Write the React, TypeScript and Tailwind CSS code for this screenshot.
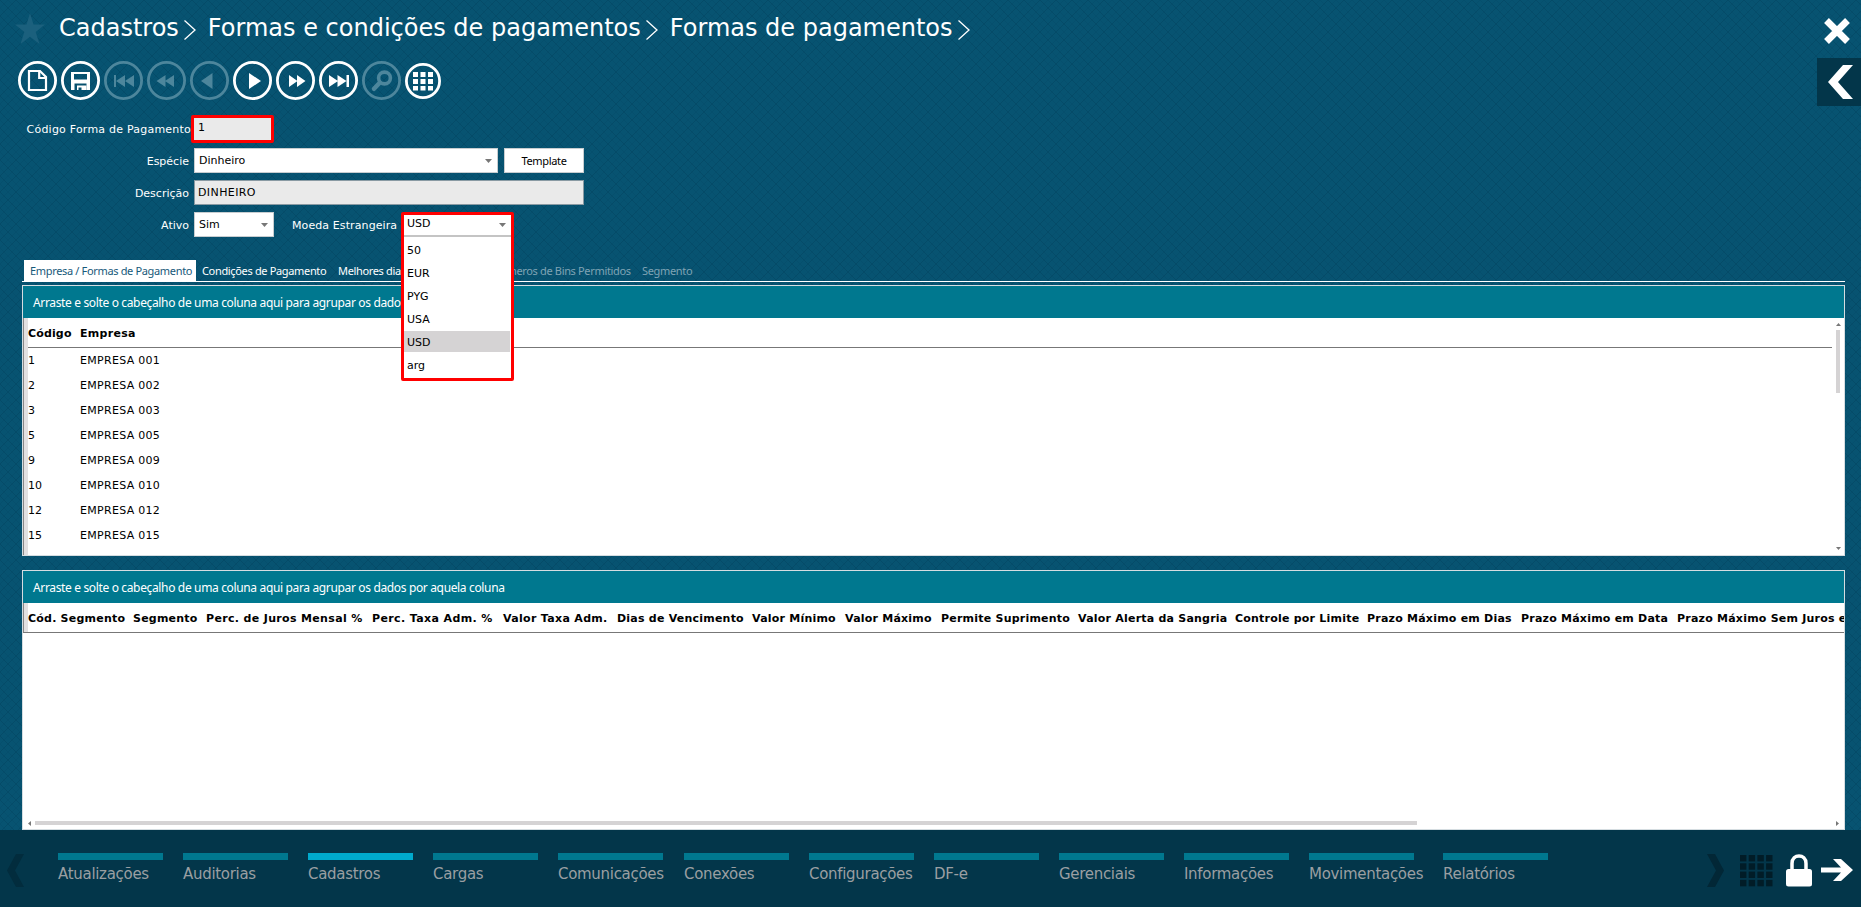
import clsx from "clsx"
import type { ReactNode } from "react"

const breadcrumbs = ["Cadastros", "Formas e condições de pagamentos", "Formas de pagamentos"]

const companies = [
  ["1", "EMPRESA 001"],
  ["2", "EMPRESA 002"],
  ["3", "EMPRESA 003"],
  ["5", "EMPRESA 005"],
  ["9", "EMPRESA 009"],
  ["10", "EMPRESA 010"],
  ["12", "EMPRESA 012"],
  ["15", "EMPRESA 015"],
]

const columns = [
  { label: "Cód. Segmento", width: "w-[105px]" },
  { label: "Segmento", width: "w-[73px]" },
  { label: "Perc. de Juros Mensal %", width: "w-[166px] tracking-[0.34px]" },
  { label: "Perc. Taxa Adm. %", width: "w-[131px] tracking-[0.38px]" },
  { label: "Valor Taxa Adm.", width: "w-[114px] tracking-[0.32px]" },
  { label: "Dias de Vencimento", width: "w-[135px]" },
  { label: "Valor Mínimo", width: "w-[93px]" },
  { label: "Valor Máximo", width: "w-[96px]" },
  { label: "Permite Suprimento", width: "w-[137px]" },
  { label: "Valor Alerta da Sangria", width: "w-[157px]" },
  { label: "Controle por Limite", width: "w-[132px]" },
  { label: "Prazo Máximo em Dias", width: "w-[154px]" },
  { label: "Prazo Máximo em Data", width: "w-[156px]" },
  { label: "Prazo Máximo Sem Juros em Dias", width: "w-[240px]" },
]

const currencies = ["50", "EUR", "PYG", "USA", "USD", "arg"]

const modules = [
  { name: "Atualizações", width: "w-[105px]" },
  { name: "Auditorias", width: "w-[105px]" },
  { name: "Cadastros", width: "w-[105px]", active: true },
  { name: "Cargas", width: "w-[105px]" },
  { name: "Comunicações", width: "w-[106px]" },
  { name: "Conexões", width: "w-[105px]" },
  { name: "Configurações", width: "w-[105px]" },
  { name: "DF-e", width: "w-[105px]" },
  { name: "Gerenciais", width: "w-[105px]" },
  { name: "Informações", width: "w-[105px]" },
  { name: "Movimentações", width: "w-[114px]" },
  { name: "Relatórios", width: "w-[105px]" },
]

const Backdrop = () => (
  <svg className="absolute inset-0 -z-10 h-full w-full" aria-hidden="true">
    <defs>
      <pattern id="mesh" width="16" height="16" patternUnits="userSpaceOnUse">
        <path d="M0 0L16 16M16 0L0 16" stroke="#044560" strokeWidth="1" strokeOpacity="0.55" />
        <path d="M8 0L16 8L8 16L0 8Z" fill="none" stroke="#044560" strokeWidth="1" strokeOpacity="0.25" />
      </pattern>
    </defs>
    <rect width="100%" height="100%" fill="#075371" />
    <rect width="100%" height="100%" fill="url(#mesh)" />
  </svg>
)

const RoundButton = ({ children, disabled }: { children: ReactNode; disabled?: boolean }) => (
  <button className={clsx("size-[39px] shrink-0", disabled ? "text-[#4d869c]" : "text-white")}>
    <svg viewBox="0 0 39 39" className="size-full" fill="currentColor">
      <circle cx="19.5" cy="19.5" r="18.1" fill="none" stroke="currentColor" strokeWidth="2.8" />
      {children}
    </svg>
  </button>
)

const Toolbar = () => (
  <div className="flex h-[39px] items-center gap-1 pl-[18px]">
    <RoundButton>
      <path d="M11 10H22L28 16V29H11Z" fill="none" stroke="currentColor" strokeWidth="2.2" />
      <path d="M21.2 10V17H28" fill="none" stroke="currentColor" strokeWidth="2.2" />
    </RoundButton>
    <RoundButton>
      <path fillRule="evenodd" d="M10 11H29V29H10ZM13 13V18.500H26V13ZM13.500 22.500H25.500V29H13.500Z" />
      <path fillRule="evenodd" d="M16 24.500H25.500V29H16ZM17.500 26.500V29H20.500V26.500Z" />
    </RoundButton>
    <RoundButton disabled>
      <path d="M10 14H12V26H10ZM21 14V26L12 20ZM30 14V26L21 20Z" />
    </RoundButton>
    <RoundButton disabled>
      <path d="M18.500 14V26L9.500 20ZM27 14V26L18 20Z" />
    </RoundButton>
    <RoundButton disabled>
      <path d="M22.500 12V28L11 20Z" />
    </RoundButton>
    <RoundButton>
      <path d="M16 12V28L28 20Z" />
    </RoundButton>
    <RoundButton>
      <path d="M13 14V26L21.500 20ZM21 14V26L29.500 20Z" />
    </RoundButton>
    <RoundButton>
      <path d="M10 14V26L19 20ZM18.500 14V26L27.500 20ZM27.500 14H30V26H27.500Z" />
    </RoundButton>
    <RoundButton disabled>
      <circle cx="22.5" cy="17" r="5.9" fill="none" stroke="currentColor" strokeWidth="3.6" />
      <path d="M17.500 22L12 27.800" stroke="currentColor" strokeWidth="4.5" strokeLinecap="round" />
    </RoundButton>
    <button className="size-9 text-white">
      <svg viewBox="0 0 36 36" className="size-full" fill="currentColor">
        <circle cx="18" cy="18" r="16.6" fill="none" stroke="currentColor" strokeWidth="2.8" />
        <path d="M8 9h5v5H8zM15.500 9h5v5h-5zM23 9h5v5h-5zM8 16h5v5H8zM15.500 16h5v5h-5zM23 16h5v5h-5zM8 23h5v4.500H8zM15.500 23h5v4.500h-5zM23 23h5v4.500h-5z" />
      </svg>
    </button>
  </div>
)

const Caret = () => (
  <svg width="7" height="4" viewBox="0 0 7 4" className="shrink-0">
    <path d="M0 0H7L3.500 4Z" fill="#777" />
  </svg>
)

const Label = ({ children }: { children: ReactNode }) => (
  <label className="w-[191px] shrink-0 pt-[3px] pr-[2px] text-right text-[11px] text-white">{children}</label>
)

const Field = ({ value, className, caret }: { value: string; className: string; caret?: boolean }) => (
  <div className={clsx("flex h-[25px] items-center justify-between border pt-px pr-[5px] text-[11px] text-black", className)}>
    <span>{value}</span>
    {caret && <Caret />}
  </div>
)

const CurrencySelect = () => (
  <div className="absolute top-0 left-[401px] z-10 h-[169px] w-[113px] rounded-[2px] border-[3px] border-[#f00] bg-white text-[11px] text-black">
    <div className="flex h-[22px] items-center justify-between border-b-2 border-[#c4c4c4] pr-[5px] pb-px pl-[3px]">
      <span>USD</span>
      <Caret />
    </div>
    <ul className="flex flex-col gap-0.5 pt-0.5 pr-px">
      {currencies.map((currency) => (
        <li
          key={currency}
          className={clsx("h-[21px] pl-[3px] leading-[23px]", currency === "USD" && "bg-[#d5d3d4]")}
        >
          {currency}
        </li>
      ))}
    </ul>
  </div>
)

const Form = () => (
  <div className="relative z-10 mt-[15px] h-[145px]">
    <div className="flex h-7 items-center">
      <Label>
        <span className="mr-[-2px] tracking-[0.22px]">Código Forma de Pagamento</span>
      </Label>
      <div className="flex h-7 w-[83px] items-center rounded-[2px] border-[3px] border-[#f00] bg-[#eaeaea] pb-px pl-1 text-[11px] text-black">
        1
      </div>
    </div>
    <div className="mt-[5px] flex items-center">
      <Label>Espécie</Label>
      <Field value="Dinheiro" className="ml-[3px] w-[304px] border-[#c8cdd0] bg-white pl-1" caret />
      <button className="ml-1.5 h-[25px] w-20 border border-[#c8cdd0] bg-white pt-px font-['Noto_Sans',sans-serif] text-[11px] tracking-[-0.35px] text-black">
        Template
      </button>
    </div>
    <div className="mt-[7px] flex items-center">
      <Label>Descrição</Label>
      <Field value="DINHEIRO" className="ml-[3px] w-[390px] border-[#8a9aa3] bg-[#eaeaea] pl-[3px] tracking-[0.4px]" />
    </div>
    <div className="relative mt-[7px] flex items-center">
      <Label>Ativo</Label>
      <Field value="Sim" className="ml-[3px] w-20 border-[#c8cdd0] bg-white pl-1" caret />
      <label className="ml-[18px] pt-[3px] text-[11px] tracking-[0.1px] text-white">Moeda Estrangeira</label>
      <CurrencySelect />
    </div>
  </div>
)

const Tabs = () => (
  <div className="ml-[22px] flex h-[22px] w-[1823px] border-b border-white pl-0.5 font-['Noto_Sans',sans-serif] text-[11px] leading-[21px] tracking-[-0.34px] whitespace-nowrap text-white">
    <div className="w-[172px] bg-white pl-1.5 text-[#17597a]">Empresa / Formas de Pagamento</div>
    <div className="w-[136px] pl-1.5">Condições de Pagamento</div>
    <div className="w-[160px] pl-1.5">Melhores dias</div>
    <div className="w-[138px] text-right text-[#7fa3b4]">Números de Bins Permitidos</div>
    <div className="pl-3 text-[#7fa3b4]">Segmento</div>
  </div>
)

const GroupBar = () => (
  <div className="h-8 shrink-0 bg-[#00788f] pl-[10px] font-['Noto_Sans',sans-serif] text-xs leading-[34px] tracking-[-0.35px] text-white">
    Arraste e solte o cabeçalho de uma coluna aqui para agrupar os dados por aquela coluna
  </div>
)

const CompanyGrid = () => (
  <div className="mt-[3px] ml-[22px] flex h-[271px] w-[1823px] flex-col border border-[#d5dde1] bg-white text-[11px] text-black">
    <GroupBar />
    <div className="flex min-h-0 flex-1">
      <div className="w-[5px] border-l border-[#888] bg-[#e2e0e1]" />
      <div className="flex-1">
        <div className="flex h-[30px] items-center border-b border-[#777] pt-[3px] font-bold tracking-[0.15px]">
          <span className="w-[52px]">Código</span>
          <span className="tracking-[0.3px]">Empresa</span>
        </div>
        {companies.map(([code, name]) => (
          <div key={code} className="flex h-[25px] items-center pt-0.5">
            <span className="w-[52px]">{code}</span>
            <span className="tracking-[0.3px]">{name}</span>
          </div>
        ))}
      </div>
      <div className="flex w-3 flex-col items-center py-[5px]">
        <svg width="5" height="3" viewBox="0 0 5 3">
          <path d="M0 3H5L2.500 0Z" fill="#777" />
        </svg>
        <div className="mt-1 h-[63px] w-1 bg-[#d5d3d4]" />
        <svg width="5" height="3" viewBox="0 0 5 3" className="mt-auto">
          <path d="M0 0H5L2.500 3Z" fill="#777" />
        </svg>
      </div>
    </div>
  </div>
)

const SegmentGrid = () => (
  <div className="mt-3.5 ml-[22px] flex h-[260px] w-[1823px] flex-col overflow-hidden border border-[#d5dde1] bg-white text-[11px] text-black">
    <GroupBar />
    <div className="flex h-[30px] shrink-0 overflow-hidden border-b border-[#777] leading-[31px] font-bold tracking-[0.22px] whitespace-nowrap">
      <div className="h-full w-[5px] shrink-0 border-l border-[#888] bg-[#e2e0e1]" />
      {columns.map((column) => (
        <span key={column.label} className={clsx("shrink-0", column.width)}>
          {column.label}
        </span>
      ))}
    </div>
    <div className="mt-auto flex h-3 items-center px-[5px]">
      <svg width="3" height="5" viewBox="0 0 3 5">
        <path d="M3 0V5L0 2.500Z" fill="#777" />
      </svg>
      <div className="ml-1 h-1 w-[1382px] bg-[#d5d3d4]" />
      <svg width="3" height="5" viewBox="0 0 3 5" className="ml-auto">
        <path d="M0 0V5L3 2.500Z" fill="#777" />
      </svg>
    </div>
  </div>
)

const gridCells = Array.from({ length: 16 }, (_, i) => i)

const Footer = () => (
  <footer className="flex h-[77px] bg-[#03364a]">
    <svg width="17" height="33" viewBox="0 0 17 33" className="mt-6 ml-[7px] shrink-0">
      <path d="M9 0H17L8 16.500L17 33H9L0 16.500Z" fill="#022c3d" />
    </svg>
    <nav className="ml-[34px] flex w-[1649px] gap-5 pt-[23px]">
      {modules.map(({ name, width, active }) => (
        <div key={name} className={clsx("shrink-0 text-[15px] tracking-[-0.3px] whitespace-nowrap text-[#9a9fa2]", width)}>
          <div className={clsx("h-[7px] w-[105px]", active ? "bg-[#00aacd]" : "bg-[#00788f]")} />
          <div className="mt-1 leading-5">{name}</div>
        </div>
      ))}
    </nav>
    <div className="flex items-start pt-6">
      <svg width="17" height="33" viewBox="0 0 17 33">
        <path d="M0 0H8L17 16.500L8 33H0L9 16.500Z" fill="#022736" />
      </svg>
      <svg width="33" height="33" viewBox="0 0 33 33" className="ml-4">
        {gridCells.map((i) => (
          <rect key={i} x={(i % 4) * 8.7} y={1 + Math.floor(i / 4) * 8.3} width="6.4" height="6.4" fill="#011c27" />
        ))}
      </svg>
      <svg width="26" height="33" viewBox="0 0 26 33" className="ml-[13px]">
        <path d="M6 17V9.500C6 -0.500 20 -0.500 20 9.500V17" fill="none" stroke="#fff" strokeWidth="3.5" />
        <rect y="15" width="26" height="17.5" rx="2.5" fill="#fff" />
      </svg>
      <svg width="32" height="24" viewBox="0 0 32 24" className="mt-[4px] ml-[9px]">
        <path d="M0 9.500H20L12 1H20L32 12L20 23H12L20 14.500H0Z" fill="#fff" />
      </svg>
    </div>
  </footer>
)

const App = () => (
  <div className="relative isolate flex h-[907px] w-[1861px] flex-col overflow-hidden font-['DejaVu_Sans',Verdana,sans-serif]">
    <Backdrop />
    <header className="flex h-[61px]">
      <svg width="30" height="31" viewBox="0 0 30 31" className="mt-[13px] ml-[15px]">
        <path d="M15 0L18.500 11.500H30L20.700 19L24.500 31L15 23.700L5.500 31L9.300 19L0 11.500H11.500Z" fill="#1b607d" />
      </svg>
      <div className="ml-[14px] flex h-14 items-center text-2xl leading-none text-white">
        {breadcrumbs.map((crumb) => (
          <div key={crumb} className="flex items-center">
            <span>{crumb}</span>
            <svg width="12" height="20" viewBox="0 0 12 20" className="mt-[3px] mr-3 ml-[5px]">
              <path d="M0.500 0.500L11 10L0.500 19.500" fill="none" stroke="#fff" strokeWidth="1.3" />
            </svg>
          </div>
        ))}
      </div>
      <div className="ml-auto flex flex-col items-end">
        <svg width="26" height="26" viewBox="0 0 26 26" className="mt-[18px] mr-[11px] shrink-0">
          <path d="M2.500 2.500L23.500 23.500M23.500 2.500L2.500 23.500" stroke="#fff" strokeWidth="6.8" />
        </svg>
        <div className="z-10 mt-[14px] h-12 w-11 shrink-0 bg-[#03364a] pt-[7px] pl-[11px]">
          <svg width="26" height="34" viewBox="0 0 26 34">
            <path d="M15 0H25L10 17L25 34H15L0 17Z" fill="#fff" />
          </svg>
        </div>
      </div>
    </header>
    <Toolbar />
    <Form />
    <Tabs />
    <CompanyGrid />
    <SegmentGrid />
    <Footer />
  </div>
)

export default App
